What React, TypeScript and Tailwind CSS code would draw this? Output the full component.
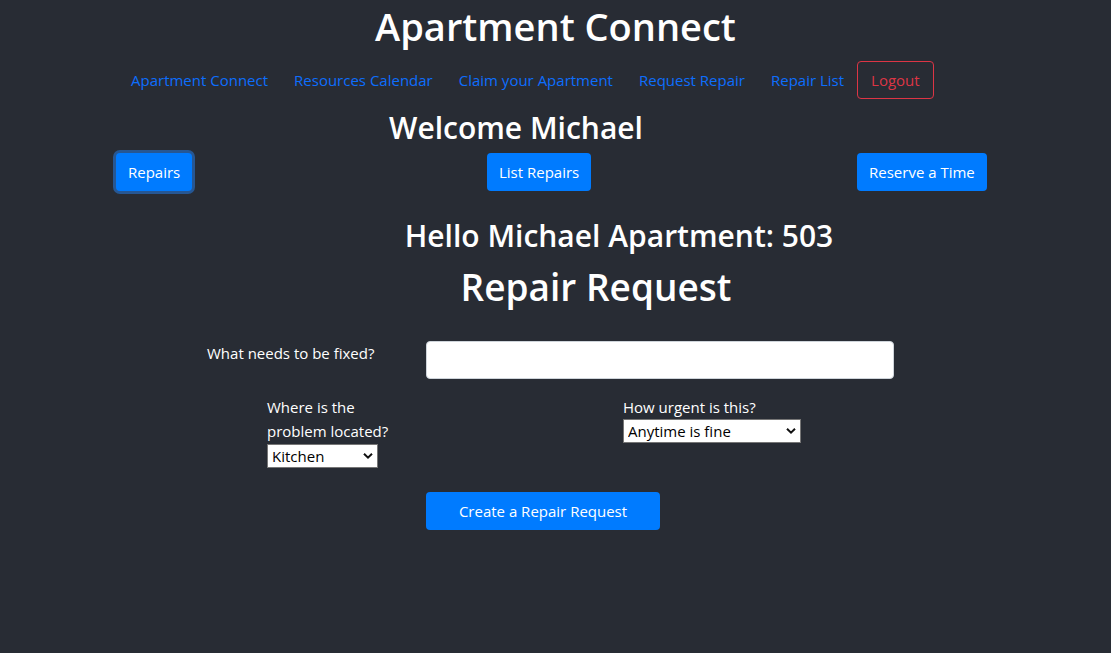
import { useState } from "react";

const navLinks = ["Apartment Connect", "Resources Calendar", "Claim your Apartment", "Request Repair", "Repair List"];

function Chevron() {
    return (
        <svg className="pointer-events-none absolute right-[5px] top-1/2 -translate-y-1/2" width="10" height="7" viewBox="0 0 10 7">
            <path d="M1 1.2 L5 5.2 L9 1.2" fill="none" stroke="#111" strokeWidth="2" />
        </svg>
    );
}

export default function App() {
    const [fix, setFix] = useState("");
    const [room, setRoom] = useState("Kitchen");
    const [urgency, setUrgency] = useState("Anytime is fine");

    return (
        <div className="min-h-[653px] bg-[#282c34] text-white font-['Open_Sans',sans-serif]">
            {/* title */}
            <h1 className="text-center text-[38px] font-semibold leading-[52px]">Apartment Connect</h1>

            {/* nav */}
            <nav className="flex items-center pl-[118px] mt-[9px] h-[38px]">
                {navLinks.map((link) => (
                    <a key={link} href="#" className="px-[13px] text-[15px] text-[#0d6efd]">{link}</a>
                ))}
                <button className="h-[38px] px-[13px] border border-[#dc3545] rounded-[4px] text-[15px] text-[#dc3545]">Logout</button>
            </nav>

            {/* welcome */}
            <h2 className="flex justify-center pr-[79px] text-[30px] font-semibold leading-[36px] mt-[11px]">Welcome Michael</h2>

            <div className="grid grid-cols-[371px_370px_auto] pl-[116px] mt-[7px]">
                <div>
                    <button className="h-[38px] px-[12px] rounded-[4px] bg-[#007bff] text-[15px] ring-[3px] ring-[#2563ad]/80">Repairs</button>
                </div>
                <div>
                    <button className="h-[38px] px-[12px] rounded-[4px] bg-[#007bff] text-[15px]">List Repairs</button>
                </div>
                <div>
                    <button className="h-[38px] px-[12px] rounded-[4px] bg-[#007bff] text-[15px]">Reserve a Time</button>
                </div>
            </div>

            <h3 className="flex justify-center pl-[127px] text-[30px] font-semibold leading-[36px] mt-[27px]">Hello Michael Apartment: 503</h3>
            <h1 className="flex justify-center pl-[81px] text-[37px] font-semibold leading-[46px] mt-[10px]">Repair Request</h1>

            {/* form */}
            <form className="mt-[31px]" onSubmit={(e) => e.preventDefault()}>
                <div className="flex items-start pl-[207px]">
                    <label className="w-[219px] text-[15px] leading-[24px]">What needs to be fixed?</label>
                    <input
                        value={fix}
                        onChange={(e) => setFix(e.target.value)}
                        className="w-[468px] h-[38px] rounded-[4px] border border-[#ced4da] bg-white text-black px-3"
                    />
                </div>

                <div className="flex items-start pl-[267px] mt-[16px]">
                    <div className="w-[356px] text-[15px] leading-[24px]">
                        <label className="block">Where is the<br />problem located?</label>
                        <div className="relative w-[111px] mt-[1px]">
                            <select
                                value={room}
                                onChange={(e) => setRoom(e.target.value)}
                                className="appearance-none w-full h-[24px] bg-white text-black border border-[#767676] pl-[4px] text-[15px] leading-[20px]"
                            >
                                <option>Kitchen</option>
                                <option>Bathroom</option>
                                <option>Bedroom</option>
                                <option>Living Room</option>
                            </select>
                            <Chevron />
                        </div>
                    </div>
                    <div className="text-[15px] leading-[24px]">
                        <label className="block">How urgent is this?</label>
                        <div className="relative w-[178px]">
                            <select
                                value={urgency}
                                onChange={(e) => setUrgency(e.target.value)}
                                className="appearance-none w-full h-[24px] bg-white text-black border border-[#767676] pl-[4px] text-[15px] leading-[20px]"
                            >
                                <option>Anytime is fine</option>
                                <option>Soon</option>
                                <option>Urgent</option>
                            </select>
                            <Chevron />
                        </div>
                    </div>
                </div>

                <div className="pl-[426px] mt-[24px]">
                    <button type="submit" className="w-[234px] h-[38px] rounded-[4px] bg-[#007bff] text-[15px]">Create a Repair Request</button>
                </div>
            </form>
        </div>
    );
}
